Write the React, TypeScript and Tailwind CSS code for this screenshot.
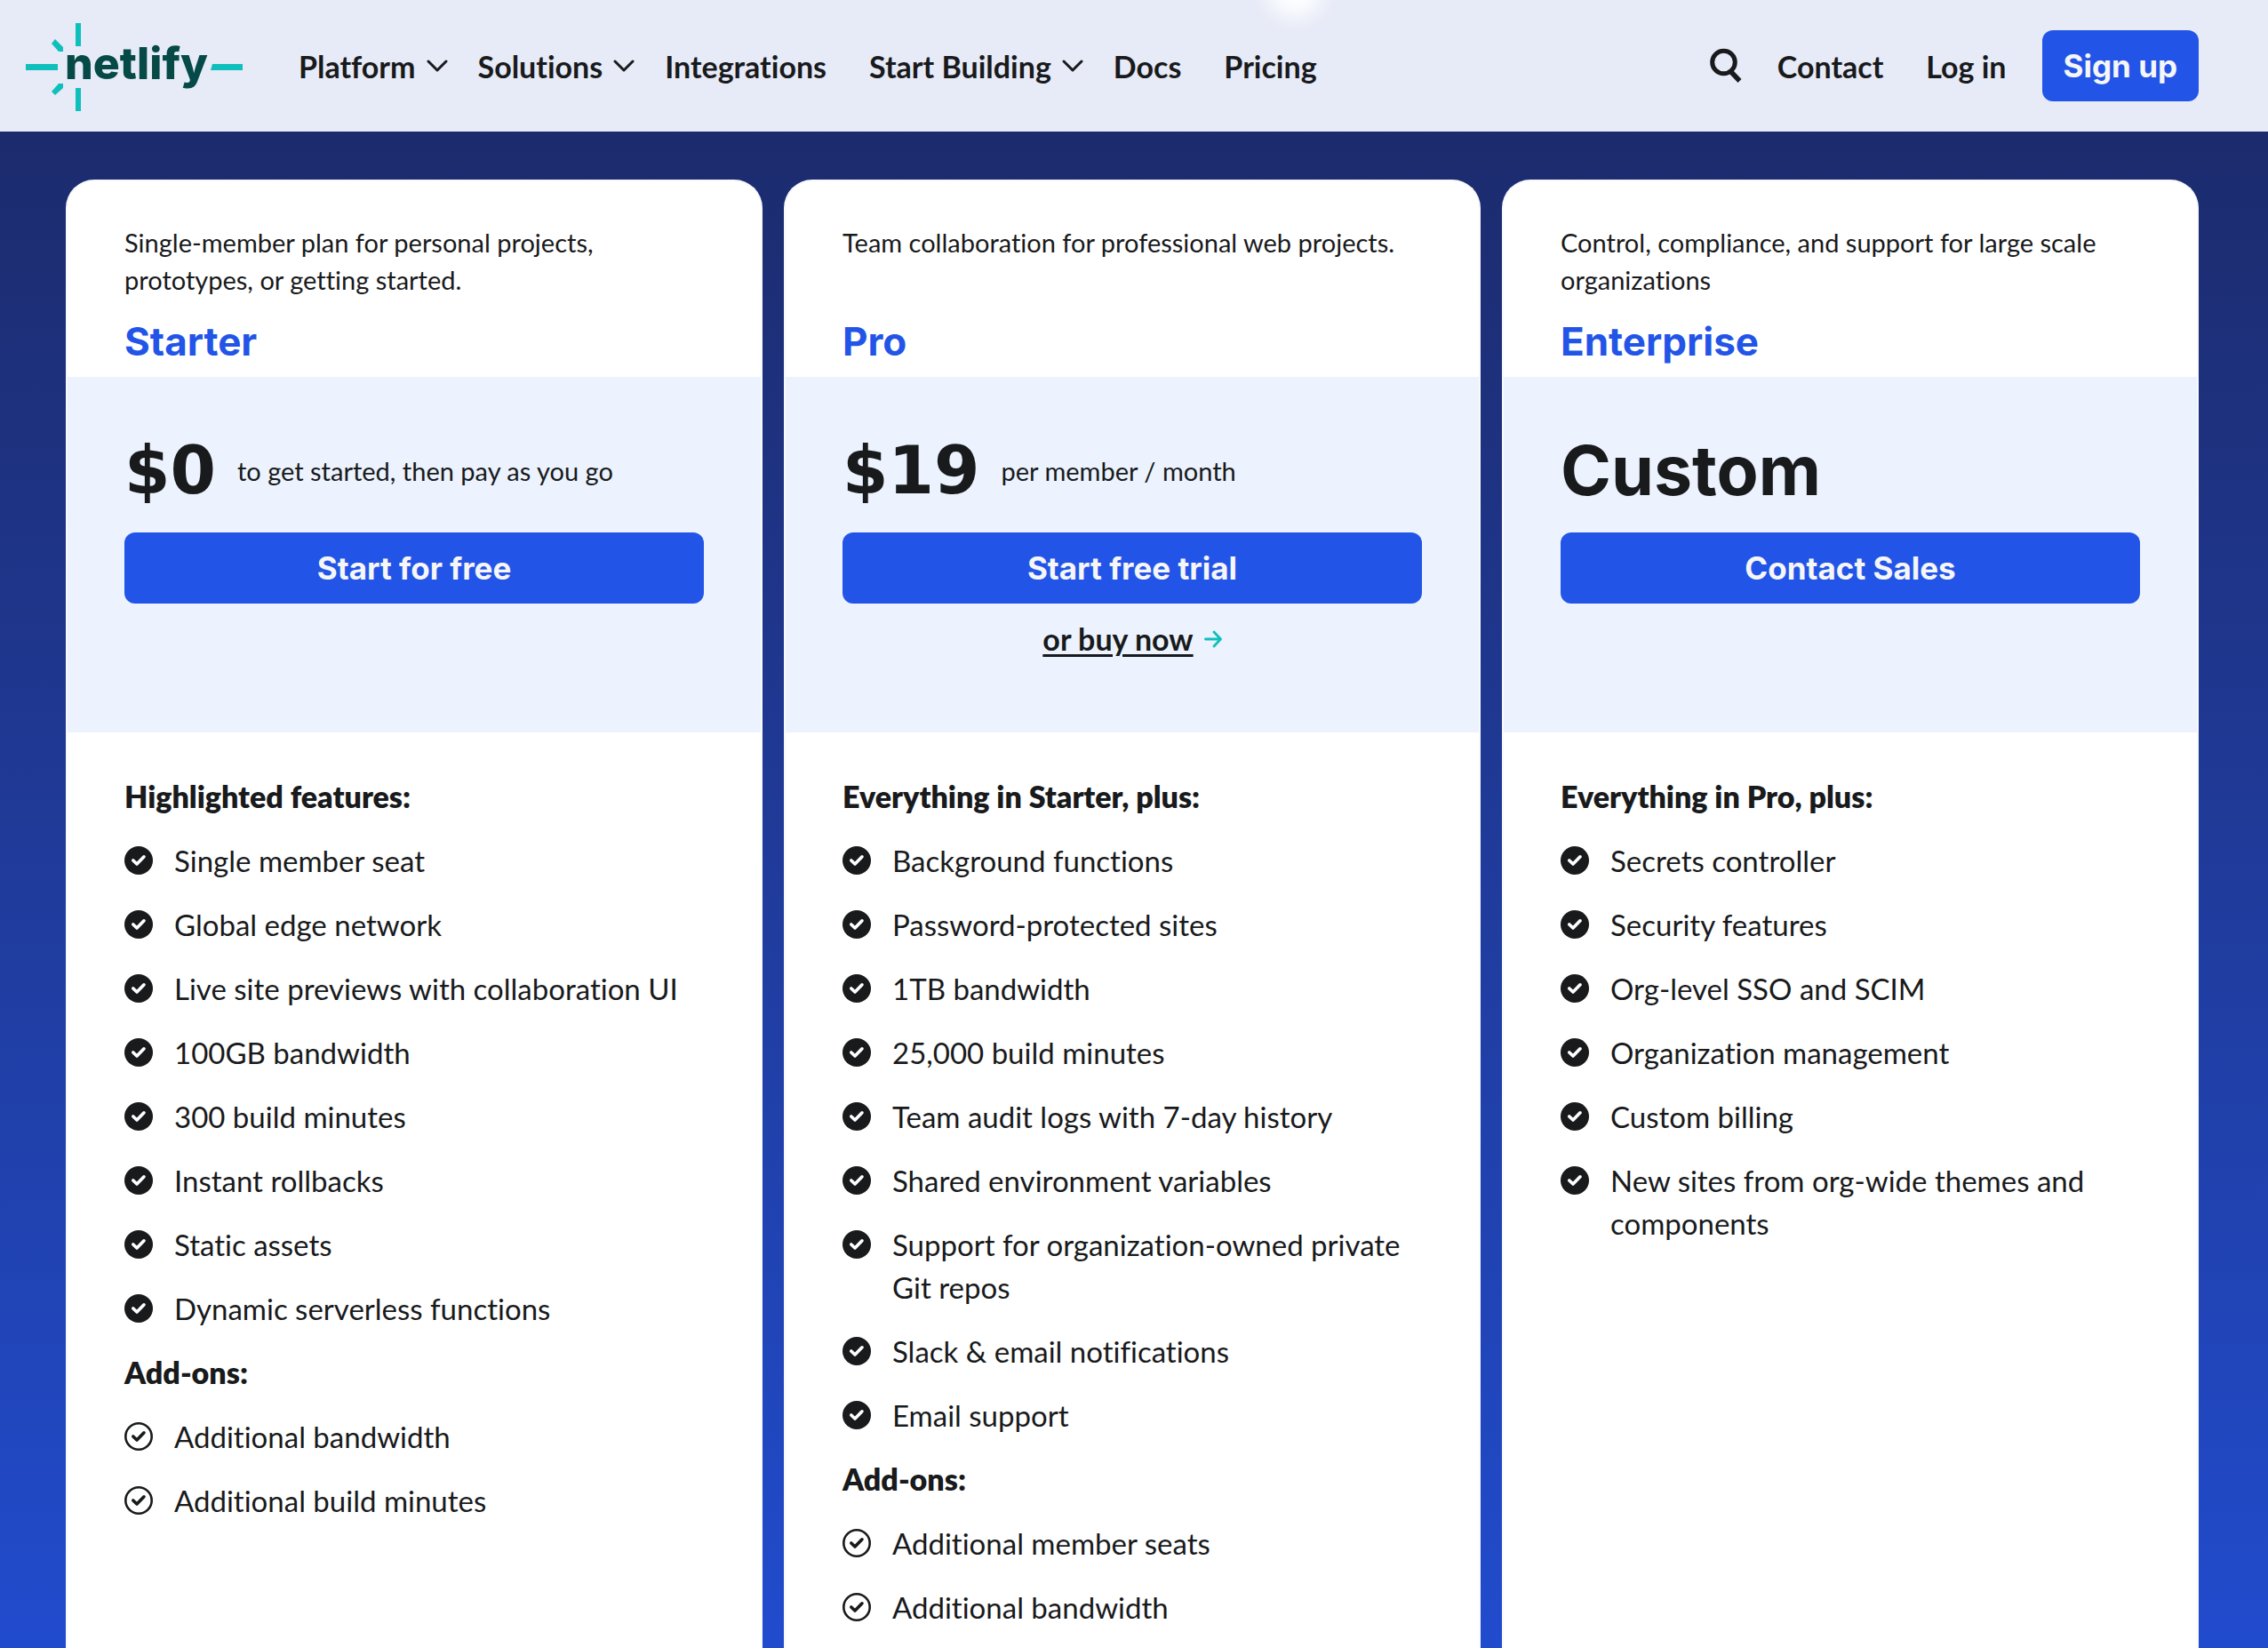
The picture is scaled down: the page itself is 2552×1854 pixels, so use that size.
import { ReactNode } from 'react';

interface Plan {
  name: string;
  description: string;
  price: string;
  priceNote?: string;
  cta: string;
  buyNow?: boolean;
  featuresTitle: string;
  features: string[];
  addOns?: string[];
}

const plans: Plan[] = [
  {
    name: 'Starter',
    description: 'Single-member plan for personal projects, prototypes, or getting started.',
    price: '$0',
    priceNote: 'to get started, then pay as you go',
    cta: 'Start for free',
    featuresTitle: 'Highlighted features:',
    features: [
      'Single member seat',
      'Global edge network',
      'Live site previews with collaboration UI',
      '100GB bandwidth',
      '300 build minutes',
      'Instant rollbacks',
      'Static assets',
      'Dynamic serverless functions',
    ],
    addOns: ['Additional bandwidth', 'Additional build minutes'],
  },
  {
    name: 'Pro',
    description: 'Team collaboration for professional web projects.',
    price: '$19',
    priceNote: 'per member / month',
    cta: 'Start free trial',
    buyNow: true,
    featuresTitle: 'Everything in Starter, plus:',
    features: [
      'Background functions',
      'Password-protected sites',
      '1TB bandwidth',
      '25,000 build minutes',
      'Team audit logs with 7-day history',
      'Shared environment variables',
      'Support for organization-owned private Git repos',
      'Slack & email notifications',
      'Email support',
    ],
    addOns: ['Additional member seats', 'Additional bandwidth'],
  },
  {
    name: 'Enterprise',
    description: 'Control, compliance, and support for large scale organizations',
    price: 'Custom',
    cta: 'Contact Sales',
    featuresTitle: 'Everything in Pro, plus:',
    features: [
      'Secrets controller',
      'Security features',
      'Org-level SSO and SCIM',
      'Organization management',
      'Custom billing',
      'New sites from org-wide themes and components',
    ],
  },
];

function Logo() {
  return (
    <svg width="244" height="104" viewBox="0 -4 244 104" aria-label="netlify">
      <g fill="#0fbfbc">
        <path d="M56 0h6v26h-6zM56 73h6v26h-6zM0 46h36v7H0zM210 46h34v7h-36z" />
        <path d="M33 18l9 9v5h-5l-8-9zM33 81l-4-4 8-9h5v5z" />
      </g>
      <text
        x="44"
        y="63"
        fontSize="50"
        fontWeight="800"
        fill="#054a47"
        className="font-['Inter',sans-serif]"
      >
        netlify
      </text>
    </svg>
  );
}

function Chevron() {
  return (
    <svg width="24" height="14" viewBox="0 0 24 14" fill="none" stroke="#181a1c" strokeWidth="3" strokeLinecap="round" strokeLinejoin="round">
      <path d="M2 2l10 10L22 2" />
    </svg>
  );
}

function SearchIcon() {
  return (
    <svg width="36" height="40" viewBox="0 0 36 40" fill="none" stroke="#181a1c" strokeWidth="5">
      <circle cx="15.5" cy="16" r="12.8" />
      <path d="M23.5 26.5l10 10.5" strokeWidth="5.5" />
    </svg>
  );
}

function CheckIcon({ outline = false }: { outline?: boolean }) {
  return (
    <svg width="32" height="32" viewBox="0 0 32 32" fill="none" className="mt-2 shrink-0">
      {outline ? (
        <circle cx="16" cy="16" r="14.7" stroke="#181a1c" strokeWidth="2.6" />
      ) : (
        <circle cx="16" cy="16" r="16" fill="#181a1c" />
      )}
      <path
        d="M9.8 16l4.2 4 8-8.2"
        stroke={outline ? '#181a1c' : '#ffffff'}
        strokeWidth="3.6"
        strokeLinecap="round"
        strokeLinejoin="round"
      />
    </svg>
  );
}

function MenuButton({ children }: { children: ReactNode }) {
  return (
    <button className="flex items-center gap-3">
      {children}
      <Chevron />
    </button>
  );
}

function Header() {
  return (
    <header className="relative flex h-[148px] shrink-0 items-center justify-between overflow-hidden bg-[#e7eaf7] pr-[78px] pl-[29px] text-[34px] font-bold">
      <div className="absolute -top-11 left-[1425px] size-16 rounded-full bg-white blur-md" />
      <div className="flex items-center gap-[63px]">
        <a href="#home">
          <Logo />
        </a>
        <nav className="flex items-center">
          <div className="flex items-center gap-[34px]">
            <MenuButton>Platform</MenuButton>
            <MenuButton>Solutions</MenuButton>
            <a href="#integrations">Integrations</a>
          </div>
          <div className="ml-12 flex items-center gap-[34px]">
            <MenuButton>Start Building</MenuButton>
            <a href="#docs">Docs</a>
          </div>
          <a href="#pricing" className="ml-12">Pricing</a>
        </nav>
      </div>
      <div className="flex items-center">
        <button aria-label="Search">
          <SearchIcon />
        </button>
        <a href="#contact" className="ml-10">Contact</a>
        <a href="#login" className="ml-12">Log in</a>
        <a
          href="#signup"
          className="ml-10 flex h-20 items-center rounded-xl bg-[#2255e7] px-6 font-['Inter',sans-serif] text-[35px] font-bold text-[#f6f6f7]"
        >
          Sign up
        </a>
      </div>
    </header>
  );
}

function FeatureList({ items, outline }: { items: string[]; outline?: boolean }) {
  return (
    <ul className="flex flex-col gap-6">
      {items.map((item) => (
        <li key={item} className="flex gap-6">
          <CheckIcon outline={outline} />
          {item}
        </li>
      ))}
    </ul>
  );
}

function PlanCard({ plan }: { plan: Plan }) {
  return (
    <article className="flex-1 overflow-hidden rounded-t-[32px] border-2 border-b-0 border-[#f8f9fb] bg-white">
      <div className="px-16 pt-12">
        <p className="min-h-[84px] text-[29px] leading-[42px]">{plan.description}</p>
        <h2 className="flex h-[88px] items-center pt-2 font-['Inter',sans-serif] text-[44px] font-bold text-[#2255e7]">
          {plan.name}
        </h2>
      </div>

      <div className="min-h-[400px] bg-[#ecf3fe] px-16 pt-[54px]">
        <div className="flex h-[103px] items-center gap-6">
          <span
            className={
              plan.priceNote
                ? "font-['DejaVu_Sans',sans-serif] text-[74px] font-bold"
                : "font-['Inter',sans-serif] text-[77px] font-bold"
            }
          >
            {plan.price}
          </span>
          {plan.priceNote && <span className="text-[29px]">{plan.priceNote}</span>}
        </div>
        <button className="mt-[18px] h-20 w-full rounded-xl bg-[#2255e7] font-['Inter',sans-serif] text-[35px] font-bold text-[#f6f6f7]">
          {plan.cta}
        </button>
        {plan.buyNow && (
          <div className="mt-4 flex items-center justify-center gap-3 text-[34px] leading-[48px] font-bold">
            <a href="#buy" className="underline decoration-3 underline-offset-4">or buy now</a>
            <svg width="20" height="20" viewBox="0 0 20 20" fill="none" stroke="#0fbfbc" strokeWidth="2.8" strokeLinecap="round" strokeLinejoin="round">
              <path d="M1.5 10h17M11 2l7.5 8L11 18" />
            </svg>
          </div>
        )}
      </div>

      <div className="flex flex-col gap-6 px-16 py-12 text-[33px] leading-[48px]">
        <h3 className="text-[34px] font-extrabold">{plan.featuresTitle}</h3>
        <FeatureList items={plan.features} />
        {plan.addOns && (
          <>
            <h3 className="text-[34px] font-extrabold">Add-ons:</h3>
            <FeatureList items={plan.addOns} outline />
          </>
        )}
      </div>
    </article>
  );
}

export default function App() {
  return (
    <div className="flex h-screen flex-col overflow-hidden bg-[#1d2b6c] font-['Lato',sans-serif] text-[#181a1c] [font-variant-ligatures:none]">
      <Header />
      <main className="flex flex-1 gap-6 bg-linear-to-b from-[#1c2b6d] to-[#214ccf] pt-[54px] pr-[78px] pl-[74px]">
        {plans.map((plan) => (
          <PlanCard key={plan.name} plan={plan} />
        ))}
      </main>
    </div>
  );
}
